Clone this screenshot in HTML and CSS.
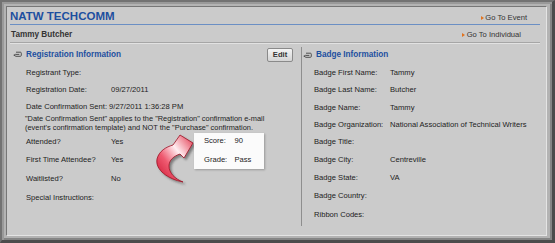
FILE: index.html
```html
<!DOCTYPE html>
<html>
<head>
<meta charset="utf-8">
<link rel="stylesheet" href="styles.css">
</head>
<body>
<div class="frame">
  <div class="panel">
    <div class="header">
      <h1 class="title">NATW TECHCOMM</h1>
      <a class="go">Go To Event</a>
    </div>
    <div class="subheader">
      <span class="person">Tammy Butcher</span>
      <a class="go">Go To Individual</a>
    </div>
    <div class="columns">
      <section class="col col-left">
        <div class="sec-head">
          <svg class="sec-icon" width="9" height="7" viewBox="0 0 9 7"><path d="M3 1.2 H7.3 Q8.3 1.2 8.3 2.2 V4.3 Q8.3 5.3 7.3 5.3 H3 L0.8 4.2 L2.4 3.4 H6.3" fill="none" stroke="#505050" stroke-width="1"/></svg>
          <h2 class="sec-title">Registration Information</h2>
          <button class="edit">Edit</button>
        </div>
        <div class="row"><span class="label">Registrant Type:</span><span class="value"></span></div>
        <div class="row row-17"><span class="label">Registration Date:</span><span class="value">09/27/2011</span></div>
        <div class="row row-17"><span class="label label-narrow">Date Confirmation Sent:</span><span class="value">9/27/2011 1:36:28 PM</span></div>
        <p class="note">"Date Confirmation Sent" applies to the "Registration" confirmation e-mail<br>(event's confirmation template) and NOT the "Purchase" confirmation.</p>
        <div class="row"><span class="label">Attended?</span><span class="value">Yes</span></div>
        <div class="row"><span class="label">First Time Attendee?</span><span class="value">Yes</span></div>
        <div class="row row-20"><span class="label">Waitlisted?</span><span class="value">No</span></div>
        <div class="row"><span class="label">Special Instructions:</span><span class="value"></span></div>
      </section>
      <section class="col col-right">
        <div class="sec-head">
          <svg class="sec-icon" width="9" height="7" viewBox="0 0 9 7"><path d="M3 1.2 H7.3 Q8.3 1.2 8.3 2.2 V4.3 Q8.3 5.3 7.3 5.3 H3 L0.8 4.2 L2.4 3.4 H6.3" fill="none" stroke="#505050" stroke-width="1"/></svg>
          <h2 class="sec-title">Badge Information</h2>
        </div>
        <div class="row"><span class="label">Badge First Name:</span><span class="value">Tammy</span></div>
        <div class="row row-17"><span class="label">Badge Last Name:</span><span class="value">Butcher</span></div>
        <div class="row"><span class="label">Badge Name:</span><span class="value">Tammy</span></div>
        <div class="row row-16"><span class="label">Badge Organization:</span><span class="value">National Association of Technical Writers</span></div>
        <div class="row"><span class="label">Badge Title:</span><span class="value"></span></div>
        <div class="row"><span class="label">Badge City:</span><span class="value">Centreville</span></div>
        <div class="row"><span class="label">Badge State:</span><span class="value">VA</span></div>
        <div class="row row-19"><span class="label">Badge Country:</span><span class="value"></span></div>
        <div class="row row-19"><span class="label">Ribbon Codes:</span><span class="value"></span></div>
      </section>
    </div>

    <svg class="arrow" width="50" height="62" viewBox="0 0 50 62">
      <defs>
        <linearGradient id="ag" x1="0" y1="1" x2="1" y2="0">
          <stop offset="0" stop-color="#c80f2c"/>
          <stop offset="0.35" stop-color="#ef5a70"/>
          <stop offset="0.62" stop-color="#ffeef1"/>
          <stop offset="1" stop-color="#e23148"/>
        </linearGradient>
        <filter id="sh" x="-20%" y="-20%" width="150%" height="150%">
          <feDropShadow dx="2" dy="2" stdDeviation="1.3" flood-color="#3a3a3a" flood-opacity="0.55"/>
        </filter>
      </defs>
      <path d="M33 54 C18 51 5 42 7 31 C9 23 16 19 23 17 L30 7 L43 15 L34 30 L30 26 C24 28 19 32 19 38 C19 45 25 51 33 54 Z" fill="url(#ag)" stroke="#9a0f22" stroke-width="0.8" filter="url(#sh)"/>
    </svg>

    <div class="score-box">
      <div class="score-row"><span class="score-label">Score:</span><span>90</span></div>
      <div class="score-row score-row-2"><span class="score-label">Grade:</span><span>Pass</span></div>
    </div>
  </div>
</div>
</body>
</html>
```

FILE: styles.css
```css
html, body {
  margin: 0;
  padding: 0;
}

body {
  width: 555px;
  height: 243px;
  overflow: hidden;
  font-family: "Liberation Sans", Arial, sans-serif;
  font-size: 7.6px;
  color: #222;
  background: #4e4e4e;
}

.frame {
  box-sizing: border-box;
  width: 555px;
  height: 243px;
  border-style: solid;
  border-width: 2px 3px 3px 2px;
  border-color: #727272 #4c4c4c #4c4c4c #727272;
  background: #b3b3b3;
  box-shadow: inset 2px 2px 0 #999, inset -2px -2px 0 #858585;
  padding: 4px 5px 4px 4px;
}

.panel {
  box-sizing: border-box;
  height: 100%;
  position: relative;
  border: 1px solid;
  border-color: #767676 #e4e4e4 #e4e4e4 #767676;
  background: #cbcbcb;
}

.header {
  display: flex;
  align-items: baseline;
  justify-content: space-between;
  margin: 0 6px 0 3px;
  padding: 3px 13px 1px 0;
  border-bottom: 1px solid #6b8fc4;
}

.title {
  margin: 0;
  font-size: 11.5px;
  line-height: 13px;
  font-weight: bold;
  color: #1d4f9f;
}

.go {
  color: #333;
  font-size: 7.6px;
  line-height: 9px;
  white-space: nowrap;
}

.go::before {
  content: "";
  display: inline-block;
  width: 0;
  height: 0;
  border-style: solid;
  border-width: 2.5px 0 2.5px 3px;
  border-color: transparent transparent transparent #e2731e;
  margin-right: 1.5px;
  vertical-align: 0;
}

.subheader {
  display: flex;
  align-items: baseline;
  justify-content: space-between;
  margin: 0 6px 0 3px;
  padding: 5px 19px 2px 1px;
  border-bottom: 1px solid #a6a6a6;
  box-shadow: 0 1px 0 #e2e2e2;
}

.person {
  font-weight: bold;
  font-size: 8.2px;
  line-height: 10px;
  color: #333;
}

.columns {
  display: flex;
  align-items: flex-start;
  margin: 0 6px 0 3px;
  padding-top: 3px;
}

.col-left {
  box-sizing: border-box;
  width: 291px;
  padding-left: 3px;
}

.col-right {
  box-sizing: border-box;
  flex: 1;
  height: 179px;
  margin-top: 1px;
  border-left: 1px solid #8e8e8e;
  padding-left: 1px;
}

.sec-head {
  display: flex;
  align-items: center;
  height: 17px;
}

.col-right .sec-head {
  height: 16px;
}

.sec-icon {
  flex: none;
  margin-right: 4px;
}

.sec-title {
  margin: 0;
  font-size: 8.2px;
  line-height: 10px;
  font-weight: bold;
  color: #1d4f9f;
  white-space: nowrap;
}

.edit {
  margin-left: auto;
  margin-right: 8px;
  box-sizing: border-box;
  width: 26px;
  height: 14px;
  padding: 0;
  border: 1px solid #8a8a8a;
  border-radius: 2px;
  background: linear-gradient(#f4f4f4, #d4d4d4);
  font-family: "Liberation Sans", Arial, sans-serif;
  font-size: 7.6px;
  font-weight: bold;
  color: #333;
  line-height: 12px;
}

.row {
  display: flex;
  align-items: center;
  height: 18px;
  line-height: 9px;
  padding-left: 13px;
  white-space: nowrap;
}

.col-right .row {
  padding-left: 11px;
}

.row-16 { height: 16px; }
.row-17 { height: 17px; }
.row-19 { height: 19px; }
.row-20 { height: 20px; }

.label {
  flex: none;
  width: 85px;
}

.label-narrow {
  width: auto;
  margin-right: 2px;
}

.col-right .label {
  width: 76px;
}

.note {
  margin: -1px 0 0 12px;
  font-size: 7.4px;
  line-height: 9px;
  white-space: nowrap;
}

.arrow {
  position: absolute;
  left: 143px;
  top: 121px;
}

.score-box {
  position: absolute;
  left: 187px;
  top: 126px;
  box-sizing: border-box;
  width: 70px;
  height: 36px;
  padding: 3px 0 0 10px;
  background: #fbfbfb;
  box-shadow: 1px 1px 2px rgba(0, 0, 0, 0.25);
}

.score-row {
  display: flex;
  line-height: 9px;
}

.score-row-2 {
  margin-top: 9.6px;
}

.score-label {
  width: 30.5px;
}
```
